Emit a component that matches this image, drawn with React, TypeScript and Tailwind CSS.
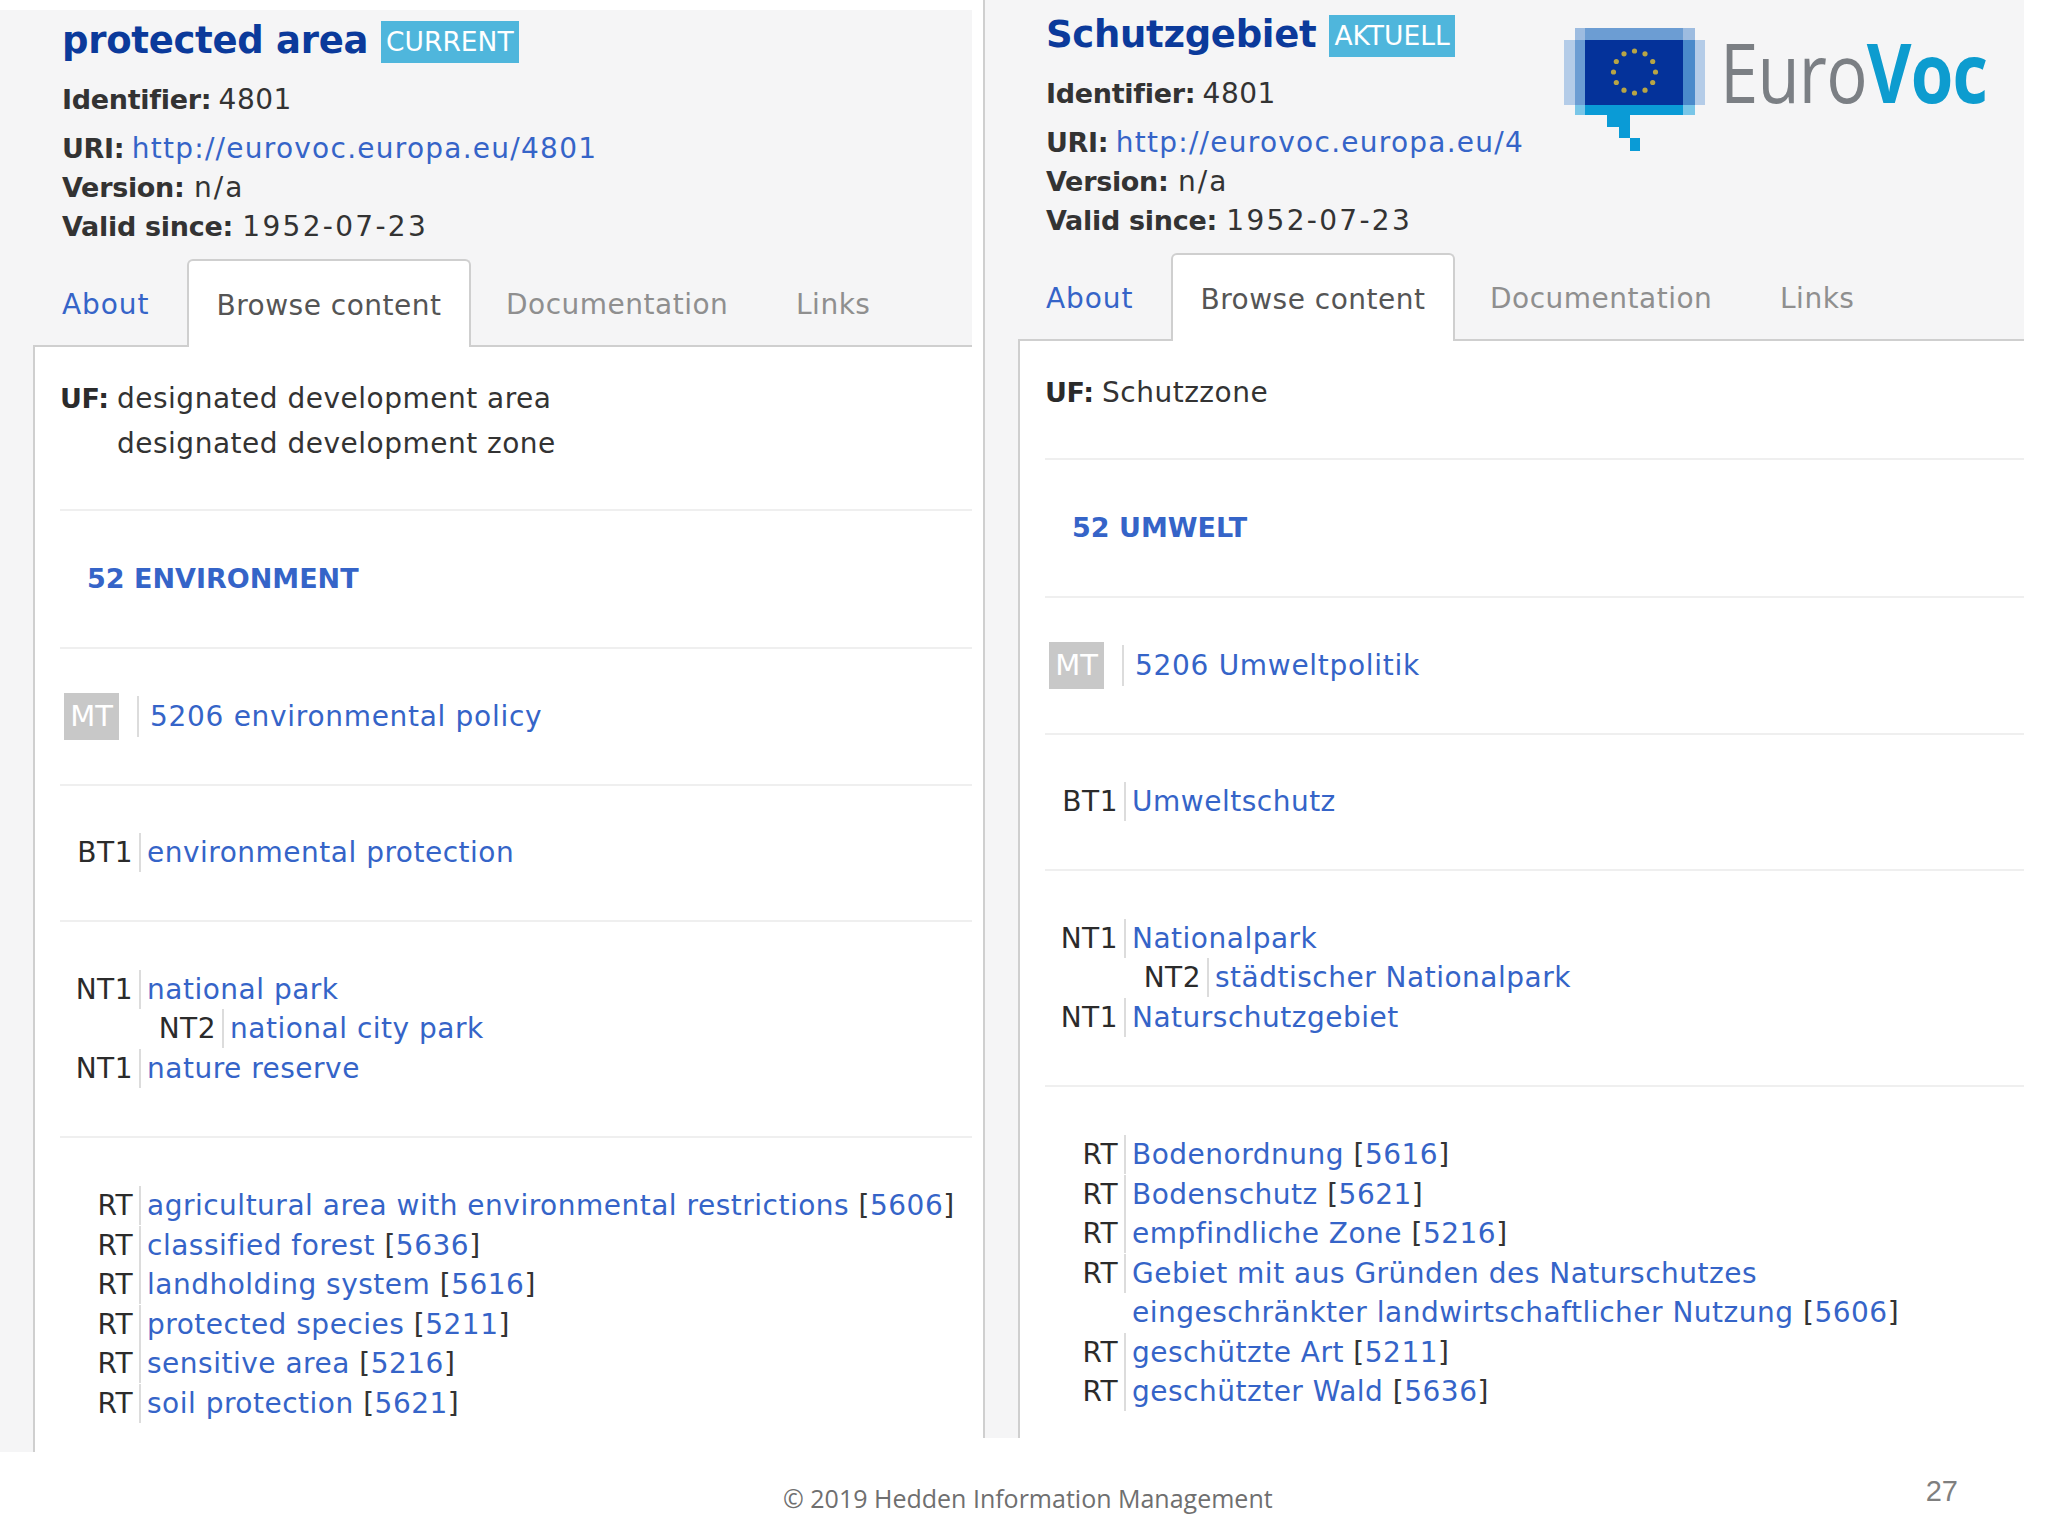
type Row = { label: string; link: string; code?: string; nested?: boolean };

const linkColor = "text-[#3564c8]";

const leftRows: Row[][] = [
  [{ label: "BT1", link: "environmental protection" }],
  [
    { label: "NT1", link: "national park" },
    { label: "NT2", link: "national city park", nested: true },
    { label: "NT1", link: "nature reserve" },
  ],
  [
    { label: "RT", link: "agricultural area with environmental restrictions", code: "5606" },
    { label: "RT", link: "classified forest", code: "5636" },
    { label: "RT", link: "landholding system", code: "5616" },
    { label: "RT", link: "protected species", code: "5211" },
    { label: "RT", link: "sensitive area", code: "5216" },
    { label: "RT", link: "soil protection", code: "5621" },
  ],
];

const rightRows: Row[][] = [
  [{ label: "BT1", link: "Umweltschutz" }],
  [
    { label: "NT1", link: "Nationalpark" },
    { label: "NT2", link: "städtischer Nationalpark", nested: true },
    { label: "NT1", link: "Naturschutzgebiet" },
  ],
  [
    { label: "RT", link: "Bodenordnung", code: "5616" },
    { label: "RT", link: "Bodenschutz", code: "5621" },
    { label: "RT", link: "empfindliche Zone", code: "5216" },
    { label: "RT", link: "Gebiet mit aus Gründen des Naturschutzes\neingeschränkter landwirtschaftlicher Nutzung", code: "5606" },
    { label: "RT", link: "geschützte Art", code: "5211" },
    { label: "RT", link: "geschützter Wald", code: "5636" },
  ],
];

function TermRow({ row }: { row: Row }) {
  return (
    <div className={`flex items-start ${row.nested ? "ml-[83px]" : ""}`}>
      <span className="h-[39px] w-[81px] shrink-0 border-r-2 border-[#dcdcdc] pr-[6px] text-right text-[#2b2b2b]">{row.label}</span>
      <span className={`whitespace-pre-line pl-[6px] ${linkColor}`}>
        {row.link}
        {row.code && (
          <>
            {" "}
            <span className="text-[#333]">[</span>
            {row.code}
            <span className="text-[#333]">]</span>
          </>
        )}
      </span>
    </div>
  );
}

function Section({ children, tight }: { children: React.ReactNode; tight?: boolean }) {
  return <div className={`border-b-2 border-[#efefef] ${tight ? "py-[47px]" : "py-[48px]"}`}>{children}</div>;
}

function Panel(props: {
  title: string;
  badge: string;
  uri: string;
  uf: string;
  domain: string;
  mt: string;
  rows: Row[][];
  className: string;
  textLeft: string;
  children?: React.ReactNode;
}) {
  const label = "text-[27px] font-bold tracking-[-0.3px]";
  return (
    <div className={`relative ${props.className} bg-[#f5f5f6]`}>
      {props.children}
      <div className={`${props.textLeft} flex h-[58px] items-center gap-[13px]`}>
        <h1 className="pt-[3px] text-[37px] font-bold tracking-[-0.3px] text-[#0b3a9b]">{props.title}</h1>
        <span className="mt-[5px] flex h-[42px] items-center bg-[#4fb6dc] px-[5px] text-[26.5px] tracking-normal text-white">{props.badge}</span>
      </div>
      <div className={`${props.textLeft} mt-[12px] leading-[39px] text-[#333]`}>
        <div><b className={label}>Identifier:</b> <span className="-ml-[2px]">4801</span></div>
        <div className="mt-[10px]">
          <b className={label}>URI:</b> <span className={`-ml-[2px] tracking-[1.25px] ${linkColor}`}>{props.uri}</span>
        </div>
        <div><b className={label}>Version:</b> <span className="tracking-[2px]">n/a</span></div>
        <div><b className={label}>Valid since:</b> <span className="tracking-[2.3px]">1952-07-23</span></div>
      </div>
      <div className={`relative z-10 -mb-[2px] mt-[13px] flex h-[88px] ${props.textLeft}`}>
        <span className={`flex w-[125px] items-center pt-[3px] tracking-[0.9px] ${linkColor}`}>About</span>
        <span className="flex w-[284px] items-center justify-center rounded-t-md border-x-2 border-t-2 border-[#cfcfcf] bg-white pt-[3px] text-[#555]">Browse content</span>
        <span className="ml-[35px] flex w-[290px] items-center pt-[3px] text-[#8f8f8f]">Documentation</span>
        <span className="flex items-center pt-[3px] text-[#8f8f8f]">Links</span>
      </div>
      <div className="ml-[33px] h-full border-l-2 border-t-2 border-[#cfcfcf] bg-white pl-[25px] leading-[39.5px]">
        <div className="flex border-b-2 border-[#efefef] pb-[43px] pt-[29px] leading-[45px]">
          <b className={`w-[57px] ${label} text-[#2b2b2b]`}>UF:</b>
          <span className="whitespace-pre-line text-[#333]">{props.uf}</span>
        </div>
        <Section>
          <b className={`ml-[27px] text-[27px] font-bold tracking-normal ${linkColor}`}>{props.domain}</b>
        </Section>
        <Section>
          <div className="flex h-[39.5px] items-center">
            <span className="ml-[4px] flex h-[47px] w-[55px] shrink-0 items-center justify-center bg-[#c8c8c8] text-[29px] tracking-normal text-white">MT</span>
            <span className="ml-[18px] h-[41px] border-l-2 border-[#dcdcdc]" />
            <span className={`ml-[11px] tracking-[0.7px] ${linkColor}`}>{props.mt}</span>
          </div>
        </Section>
        {props.rows.map((group, i) =>
          i < props.rows.length - 1 ? (
            <Section key={i} tight={i === 0}>
              {group.map((r, j) => <TermRow key={j} row={r} />)}
            </Section>
          ) : (
            <div key={i} className="pt-[48px]">
              {group.map((r, j) => <TermRow key={j} row={r} />)}
            </div>
          )
        )}
      </div>
    </div>
  );
}

function EuroVocLogo() {
  const stars = Array.from({ length: 12 }, (_, i) => {
    const a = (i / 12) * Math.PI * 2;
    return [94.5 + 21 * Math.cos(a), 62 + 21 * Math.sin(a)];
  });
  return (
    <div className="absolute left-[555px] top-[10px] flex items-start tracking-normal">
      <svg width="200" height="150" viewBox="0 0 200 150">
        <rect x="24" y="30" width="141" height="65" fill="#b4cce8" />
        <rect x="35" y="18" width="120" height="77" fill="#9dbce0" />
        <rect x="45" y="18" width="98" height="12" fill="#6c9dd3" />
        <rect x="35" y="30" width="10" height="65" fill="#6c9dd3" />
        <rect x="143" y="30" width="12" height="65" fill="#4a8acb" />
        <rect x="35" y="95" width="120" height="10" fill="#79c6e8" />
        <rect x="45" y="95" width="98" height="10" fill="#0a9bd6" />
        <rect x="45" y="30" width="98" height="65" fill="#04329a" />
        <path d="M67 105h23v23h10v13h-10v-13h-11v-11h-12z" fill="#0a9bd6" />
        {stars.map(([cx, cy], i) => <circle key={i} cx={cx} cy={cy} r="2.6" fill="#b8a545" />)}
      </svg>
      <span className="ml-[-20px] mt-[11px] origin-left scale-x-[0.84] font-['Open_Sans',sans-serif] text-[82px] leading-[100px] tracking-[-1px] text-[#7b7f84]">
        Euro<span className="font-bold text-[#0d9ccf]">Voc</span>
      </span>
    </div>
  );
}

export default function App() {
  return (
    <div className="h-[1536px] w-[2048px] overflow-hidden bg-white font-['DejaVu_Sans',sans-serif] text-[28px] tracking-[0.5px]">
      <div className="flex h-[1452px] items-start">
        <Panel
          className="mt-[10px] h-[1442px] w-[972px] overflow-hidden"
          textLeft="pl-[62px]"
          title="protected area"
          badge="CURRENT"
          uri="http://eurovoc.europa.eu/4801"
          uf={"designated development area\ndesignated development zone"}
          domain="52 ENVIRONMENT"
          mt="5206 environmental policy"
          rows={leftRows}
        />
        <Panel
          className="ml-[11px] h-[1438px] w-[1041px] overflow-hidden border-l-2 border-[#cfcfcf] pt-[4px]"
          textLeft="pl-[61px]"
          title="Schutzgebiet"
          badge="AKTUELL"
          uri="http://eurovoc.europa.eu/4"
          uf="Schutzzone"
          domain="52 UMWELT"
          mt="5206 Umweltpolitik"
          rows={rightRows}
        >
          <EuroVocLogo />
        </Panel>
      </div>
      <div className="flex items-center pl-[783px] pr-[90px] pt-[28px] tracking-normal">
        <span className="font-['Open_Sans',sans-serif] text-[25px] text-[#6f6f6f]">© 2019 Hedden Information Management</span>
        <span className="-mt-[14px] ml-auto font-['Liberation_Sans',sans-serif] text-[29px] text-[#7f7f7f]">27</span>
      </div>
    </div>
  );
}
